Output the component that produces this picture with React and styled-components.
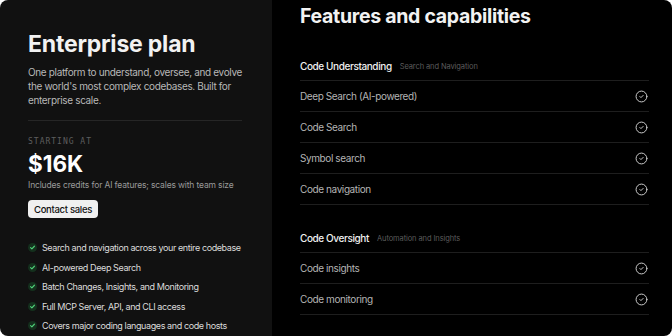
import React from "react";
import styled, { createGlobalStyle } from "styled-components";
import { CircleCheck } from "lucide-react";

const GlobalStyle = createGlobalStyle`
    html, body {
        margin: 0;
        padding: 0;
        background: #ffffff;
    }
    body {
        font-family: Inter, "Liberation Sans", sans-serif;
        -webkit-font-smoothing: antialiased;
    }
`

const Card = styled.div`
    width: 672px;
    height: 336px;
    display: grid;
    grid-template-columns: 272px 1fr;
    border-radius: 8px;
    overflow: hidden;
`

const PlanPanel = styled.div`
    background-color: #111111;
    padding: 30px 30px 0 28px;
    display: flex;
    flex-direction: column;
`

const PlanTitle = styled.h1`
    margin: 0;
    font-size: 23px;
    line-height: 28px;
    font-weight: 700;
    letter-spacing: -0.2px;
    color: #f2f2f2;
`

const PlanText = styled.p`
    margin: 7px 0 0;
    font-size: 10px;
    line-height: 14px;
    letter-spacing: -0.35px;
    color: #b8b8b8;
    white-space: nowrap;
`

const Divider = styled.hr`
    border: none;
    border-top: 1px solid #262626;
    margin: 13px 0 0;
`

const Eyebrow = styled.div`
    margin-top: 15px;
    font-family: "DejaVu Sans Mono", "Liberation Mono", monospace;
    font-size: 8px;
    line-height: 12px;
    letter-spacing: 1px;
    color: #5e5e5e;
`

const Price = styled.div`
    margin-top: 3px;
    font-size: 22.5px;
    line-height: 26px;
    font-weight: 700;
    color: #ffffff;
`

const PriceNote = styled.div`
    margin-top: 2px;
    font-size: 8.5px;
    line-height: 12px;
    letter-spacing: -0.15px;
    color: #9a9a9a;
`

const ContactButton = styled.button`
    align-self: flex-start;
    margin-top: 9px;
    height: 18px;
    padding: 0 6px;
    border: none;
    border-radius: 4px;
    background-color: #f0f0f0;
    color: #111111;
    font-family: inherit;
    font-size: 9.5px;
    font-weight: 500;
    letter-spacing: -0.3px;
    cursor: pointer;
`

const PerkList = styled.ul`
    list-style: none;
    margin: 20px 0 0;
    padding: 0;
    display: flex;
    flex-direction: column;
`

const Perk = styled.li`
    display: flex;
    align-items: center;
    gap: 5px;
    height: 19.5px;
    font-size: 9px;
    letter-spacing: -0.4px;
    white-space: nowrap;
    color: #dcdcdc;
`

const FeaturesPanel = styled.div`
    background-color: #000000;
    padding: 4px 23px 0 28px;
    display: flex;
    flex-direction: column;
`

const FeaturesTitle = styled.h2`
    margin: 0;
    font-size: 19.5px;
    line-height: 24px;
    font-weight: 700;
    letter-spacing: -0.3px;
    color: #f2f2f2;
`

const Section = styled.section`
    margin-top: ${(p) => p.$gap}px;
`

const SectionHead = styled.div`
    height: 28px;
    display: flex;
    align-items: center;
    gap: 8px;
    border-bottom: 1px solid #1e1e1e;
`

const SectionName = styled.span`
    font-size: 10px;
    font-weight: 500;
    letter-spacing: -0.4px;
    color: #f0f0f0;
`

const SectionSub = styled.span`
    font-size: 7.5px;
    letter-spacing: -0.1px;
    color: #5c5c5c;
`

const FeatureRow = styled.div`
    height: 30px;
    display: flex;
    align-items: center;
    justify-content: space-between;
    border-bottom: 1px solid #1e1e1e;
    font-size: 10px;
    letter-spacing: -0.4px;
    color: #b4b4b4;
    padding-right: 1px;
`

function GreenCheck() {
    return (
        <svg width="9" height="9" viewBox="0 0 10 10">
            <circle cx="5" cy="5" r="5" fill="#14301d" />
            <path d="M2.9 5.2 L4.3 6.5 L7.1 3.6" fill="none" stroke="#4fcf78" strokeWidth="1.3" strokeLinecap="round" strokeLinejoin="round" />
        </svg>
    )
}

const perks = [
    "Search and navigation across your entire codebase",
    "AI-powered Deep Search",
    "Batch Changes, Insights, and Monitoring",
    "Full MCP Server, API, and CLI access",
    "Covers major coding languages and code hosts",
]

const sections = [
    {
        name: "Code Understanding",
        sub: "Search and Navigation",
        gap: 24,
        rows: ["Deep Search (AI-powered)", "Code Search", "Symbol search", "Code navigation"],
    },
    {
        name: "Code Oversight",
        sub: "Automation and Insights",
        gap: 19,
        rows: ["Code insights", "Code monitoring"],
    },
]

export default function App() {
    return (
        <>
            <GlobalStyle />
            <Card>
                <PlanPanel>
                    <PlanTitle>Enterprise plan</PlanTitle>
                    <PlanText>
                        One platform to understand, oversee, and evolve<br />
                        the world's most complex codebases. Built for<br />
                        enterprise scale.
                    </PlanText>
                    <Divider />
                    <Eyebrow>STARTING AT</Eyebrow>
                    <Price>$16K</Price>
                    <PriceNote>Includes credits for AI features; scales with team size</PriceNote>
                    <ContactButton>Contact sales</ContactButton>
                    <PerkList>
                        {perks.map((perk) => (
                            <Perk key={perk}>
                                <GreenCheck />
                                {perk}
                            </Perk>
                        ))}
                    </PerkList>
                </PlanPanel>
                <FeaturesPanel>
                    <FeaturesTitle>Features and capabilities</FeaturesTitle>
                    {sections.map((section) => (
                        <Section key={section.name} $gap={section.gap}>
                            <SectionHead>
                                <SectionName>{section.name}</SectionName>
                                <SectionSub>{section.sub}</SectionSub>
                            </SectionHead>
                            {section.rows.map((row) => (
                                <FeatureRow key={row}>
                                    {row}
                                    <CircleCheck size={13} strokeWidth={1.8} color="#cfcfcf" />
                                </FeatureRow>
                            ))}
                        </Section>
                    ))}
                </FeaturesPanel>
            </Card>
        </>
    )
}
